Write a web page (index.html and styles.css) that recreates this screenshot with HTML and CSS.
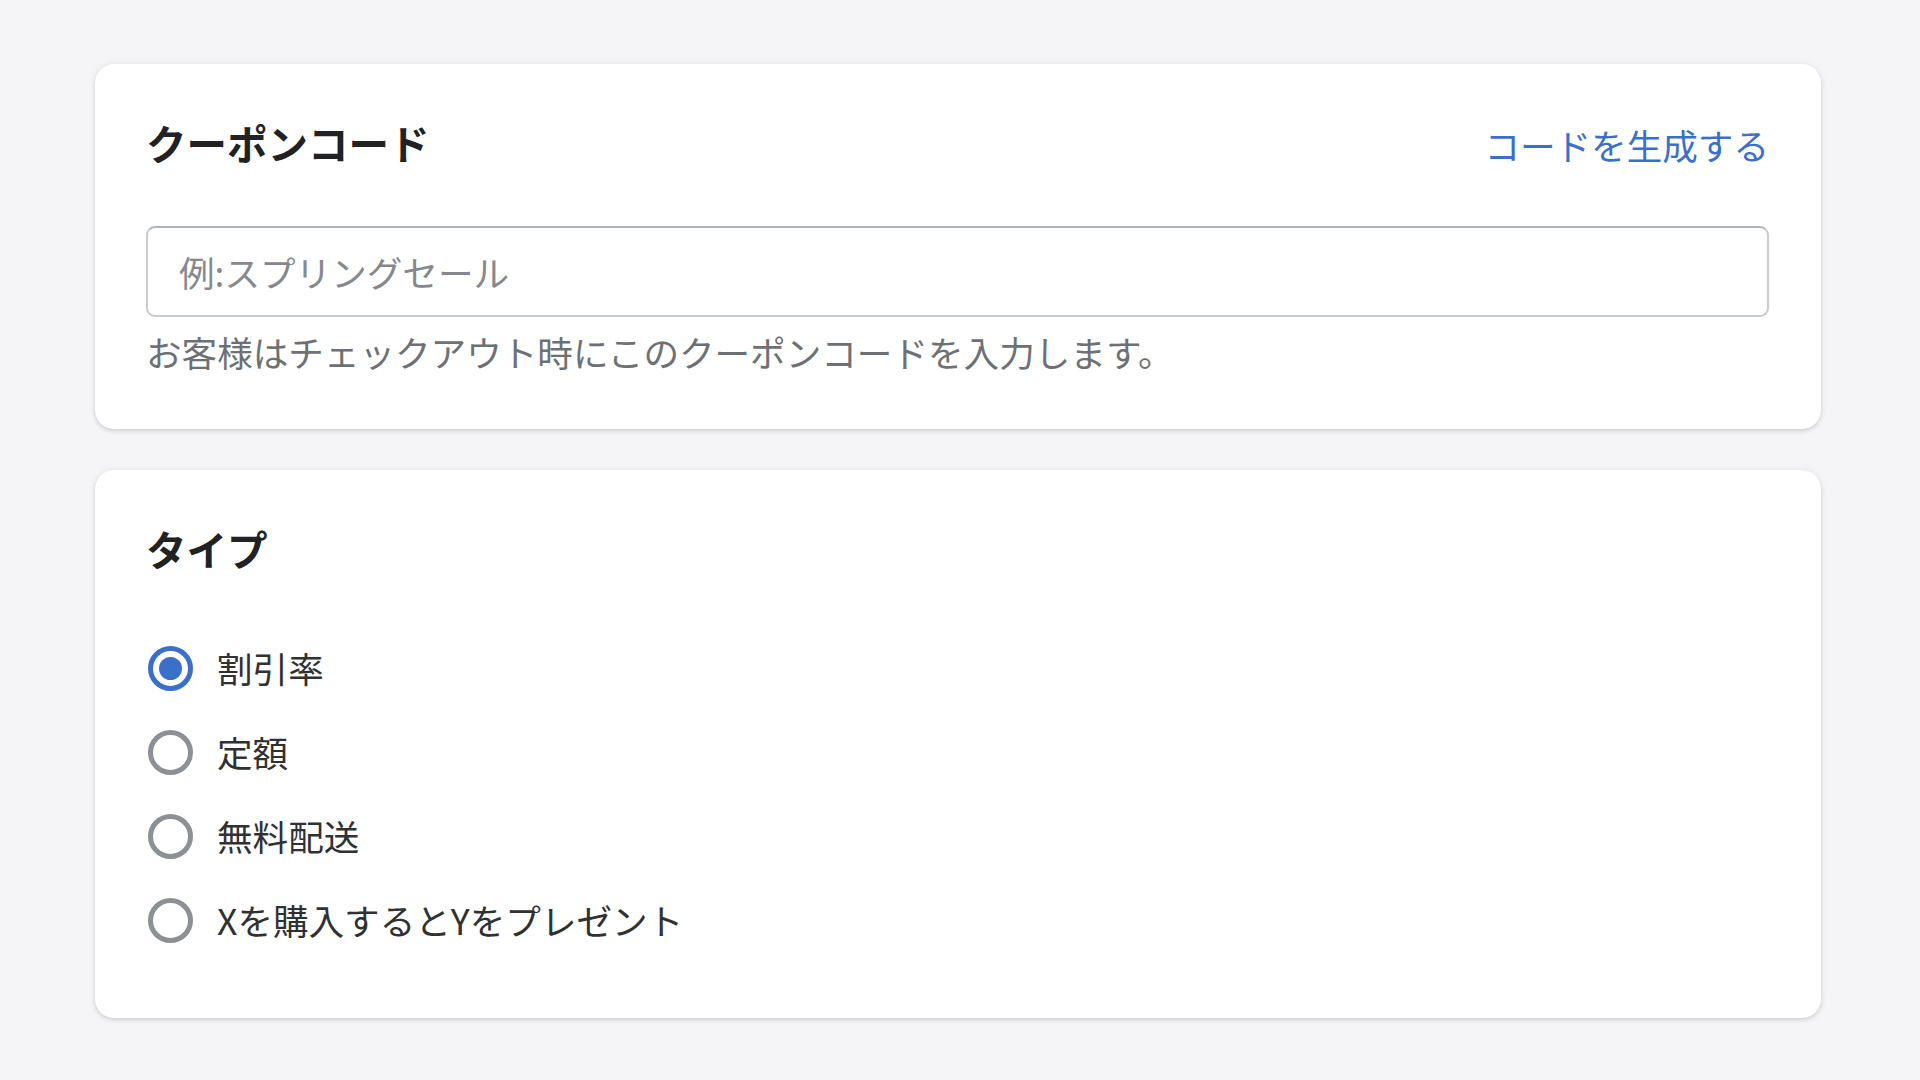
FILE: index.html
```html
<!DOCTYPE html>
<html lang="ja">
<head>
<meta charset="utf-8">
<title>クーポンコード</title>
<link rel="stylesheet" href="styles.css">
</head>
<body>
<main class="page">
  <section class="card">
    <div class="card-header">
      <h2 class="card-title">クーポンコード</h2>
      <a class="link" href="#">コードを生成する</a>
    </div>
    <div class="field">
      <input class="text-input" type="text" placeholder="例:スプリングセール">
      <p class="help">お客様はチェックアウト時にこのクーポンコードを入力します。</p>
    </div>
  </section>

  <section class="card card-type">
    <div class="card-header">
      <h2 class="card-title">タイプ</h2>
    </div>
    <div class="choices">
      <label class="choice"><input class="radio" type="radio" name="type" checked><span class="choice-label">割引率</span></label>
      <label class="choice"><input class="radio" type="radio" name="type"><span class="choice-label">定額</span></label>
      <label class="choice"><input class="radio" type="radio" name="type"><span class="choice-label">無料配送</span></label>
      <label class="choice"><input class="radio" type="radio" name="type"><span class="choice-label">Xを購入するとYをプレゼント</span></label>
    </div>
  </section>
</main>
</body>
</html>
```

FILE: styles.css
```css
* {
  box-sizing: border-box;
}

html, body {
  margin: 0;
  padding: 0;
}

body {
  background: #f5f5f7;
  font-family: "Noto Sans CJK JP", "Noto Sans", sans-serif;
  color: #202223;
  width: 1920px;
  height: 1080px;
  overflow: hidden;
}

.page {
  padding: 64px 99px 0 95px;
  display: flex;
  flex-direction: column;
  gap: 41px;
}

.card {
  background: #ffffff;
  border-radius: 19px;
  box-shadow: 0 0 10px rgba(23, 24, 24, 0.05), 0 2px 4px rgba(0, 0, 0, 0.13);
  padding: 55px 52px 53px 51px;
}

.card-type {
  padding-bottom: 56px;
}

.card-header {
  display: flex;
  justify-content: space-between;
  align-items: center;
  height: 48px;
}

.card-title {
  margin: 0;
  font-size: 40.5px;
  line-height: 48px;
  font-weight: 700;
  color: #202223;
}

.link {
  font-size: 35.6px;
  line-height: 48px;
  color: #3a70cb;
  text-decoration: none;
  margin-top: 4px;
}

.field {
  margin-top: 59px;
  display: flex;
  flex-direction: column;
}

.text-input {
  display: block;
  width: 100%;
  height: 91px;
  border: 2px solid #c9cccf;
  border-top-color: #aeb4b9;
  border-radius: 9px;
  padding: 0 31px;
  font-family: inherit;
  font-size: 35.6px;
  color: #202223;
  background: #ffffff;
  outline: none;
}

.text-input::placeholder {
  color: #85898e;
}

.help {
  margin: 11px 0 0 0;
  font-size: 35.6px;
  line-height: 48px;
  color: #6d7175;
}

.choices {
  margin-top: 53px;
  display: flex;
  flex-direction: column;
}

.choice {
  display: flex;
  align-items: center;
  height: 84px;
  gap: 24px;
  padding-left: 2px;
}

.radio {
  appearance: none;
  -webkit-appearance: none;
  margin: 0;
  width: 45px;
  height: 45px;
  border-radius: 50%;
  border: 5px solid #8c9196;
  background: #ffffff;
  display: grid;
  place-items: center;
  flex: none;
}

.radio:checked {
  border-color: #3a6fcb;
}

.radio:checked::before {
  content: "";
  width: 23px;
  height: 23px;
  border-radius: 50%;
  background: #3a6fcb;
}

.choice-label {
  font-size: 35.6px;
  line-height: 48px;
  color: #303133;
}
```
